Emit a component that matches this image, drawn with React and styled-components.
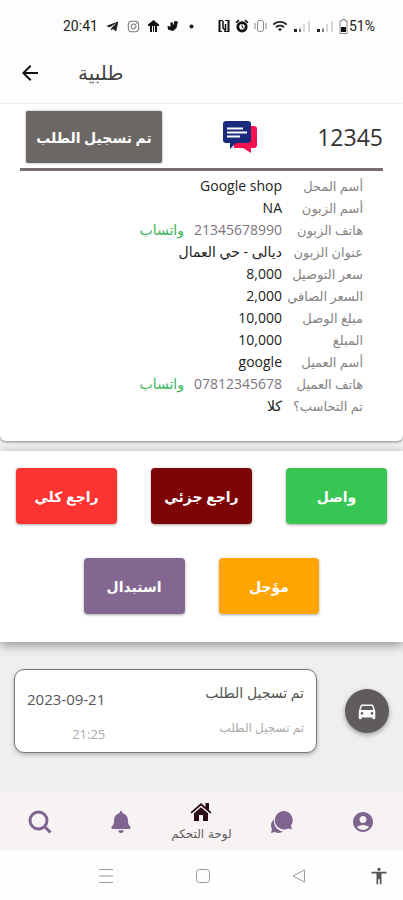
import React from 'react';
import styled, { createGlobalStyle } from 'styled-components';
import { FaTelegramPlane, FaInstagram, FaBell } from 'react-icons/fa';
import {
  MdAccessibility,
  MdAccountCircle,
  MdArrowBack,
  MdDirectionsCar,
  MdWifi,
} from 'react-icons/md';

const GlobalStyle = createGlobalStyle`
  * {
    box-sizing: border-box;
  }

  body {
    margin: 0;
    background: #efefef;
    color: #333;
    font-family: 'Open Sans', 'DejaVu Sans', sans-serif;
  }

  svg {
    display: block;
    flex-shrink: 0;
  }
`;

const Screen = styled.div`
  display: flex;
  flex-direction: column;
  min-height: 100vh;
`;

const StatusBar = styled.div`
  display: flex;
  align-items: center;
  justify-content: space-between;
  height: 52px;
  padding: 0 28px 0 63px;
  background: #fdfdfd;
  color: #222;
  font-family: Roboto, sans-serif;
  font-size: 14px;
`;

const StatusGroup = styled.div`
  display: flex;
  align-items: center;
  gap: ${({ $gap }) => $gap}px;
`;

const Header = styled.header`
  display: flex;
  align-items: center;
  gap: 36px;
  height: 52px;
  padding: 0 18px 10px;
  background: #fdfdfd;
`;

const BackButton = styled.button`
  padding: 0;
  border: 0;
  background: none;
  color: #111;
  font-size: 24px;
`;

const Title = styled.h1`
  margin: 0;
  color: #444;
  font-family: 'DejaVu Sans', sans-serif;
  font-size: 20px;
  font-weight: 400;
  line-height: 24px;
`;

const OrderCard = styled.section`
  padding: 7px 20px 24px;
  border-radius: 0 0 6px 6px;
  background: #fff;
  box-shadow: 0 1px 3px rgba(0, 0, 0, 0.45);
`;

const OrderTop = styled.div`
  display: flex;
  align-items: center;
  justify-content: space-between;
  padding: 0 0 5px 6px;
  border-bottom: 3px solid #7c6f74;
`;

const StatusButton = styled.button`
  width: 136px;
  height: 52px;
  padding: 0;
  border: 0;
  border-radius: 2px;
  background: #6b6765;
  box-shadow: 0 0 2px rgba(0, 0, 0, 0.5);
  color: #fff;
  font-family: inherit;
  font-size: 14px;
  font-weight: 700;
`;

const ChatButton = styled.button`
  padding: 0;
  border: 0;
  background: none;
`;

const OrderNumber = styled.span`
  color: #333;
  font-size: 23px;
  line-height: 32px;
`;

const Details = styled.dl`
  display: grid;
  grid-template-columns: 81px 1fr;
  margin: 0;
  padding: 4px 20px 0 0;
  font-size: 13px;
  line-height: 22px;
  white-space: nowrap;
`;

const Label = styled.dt`
  color: #858585;
`;

const Value = styled.dd`
  display: flex;
  gap: 10px;
  height: 22px;
  margin: 0;
  color: ${({ $phone }) => ($phone ? '#7d7480' : '#222')};
  font-size: 14px;
`;

const WhatsappLink = styled.a`
  color: #3bb55c;
  text-decoration: none;
`;

const Actions = styled.section`
  display: flex;
  flex-wrap: wrap;
  justify-content: center;
  gap: 34px;
  margin-top: 10px;
  padding: 17px 16px 28px;
  background: #fff;
  box-shadow: 0 3px 10px rgba(0, 0, 0, 0.4);
`;

const ActionButton = styled.button`
  flex: 0 0 calc((100% - 68px) / 3);
  height: 56px;
  padding: 0;
  border: 0;
  border-radius: 4px;
  background: ${({ $color }) => $color};
  box-shadow: 0 1px 3px rgba(0, 0, 0, 0.35);
  color: #fff;
  font-family: inherit;
  font-size: 14px;
  font-weight: 700;
`;

const Timeline = styled.main`
  display: flex;
  flex: 1;
  align-items: flex-start;
  gap: 28px;
  padding: 27px 14px;
`;

const Entry = styled.article`
  display: flex;
  flex: 1;
  justify-content: space-between;
  height: 84px;
  padding: 11px 12px;
  border: 1px solid #777;
  border-radius: 10px;
  background: #fff;
  box-shadow: 0 2px 4px rgba(0, 0, 0, 0.25);
`;

const EntryText = styled.div`
  display: flex;
  flex-direction: column;
  gap: 12px;
  padding-top: ${({ $drop }) => ($drop ? 6 : 0)}px;
  text-align: right;
`;

const EntryTitle = styled.span`
  color: #555;
  font-size: ${({ $size }) => $size}px;
  line-height: 24px;
`;

const EntryNote = styled.span`
  color: #aaa;
  font-size: ${({ $size }) => $size}px;
  line-height: 22px;
`;

const EntryIcon = styled.span`
  display: grid;
  place-items: center;
  width: 44px;
  height: 44px;
  margin-top: 20px;
  border-radius: 50%;
  background: #5f5c5b;
  box-shadow: 0 2px 5px rgba(0, 0, 0, 0.35);
  color: #fff;
  font-size: 22px;
`;

const TabBar = styled.nav`
  display: grid;
  grid-template-columns: repeat(5, 1fr);
  height: 59px;
  background: #f7f3f3;
`;

const Tab = styled.a`
  display: flex;
  flex-direction: column;
  align-items: center;
  justify-content: center;
  gap: 4px;
  color: ${({ $active }) => ($active ? '#2b0b18' : '#7f6490')};
  font-size: 24px;
  text-decoration: none;
`;

const TabLabel = styled.span`
  color: #64595f;
  font-family: 'DejaVu Sans', sans-serif;
  font-size: 12px;
  line-height: 16px;
  white-space: nowrap;
`;

const SystemBar = styled.div`
  display: grid;
  grid-template-columns: 58fr 96fr 97fr 96fr 56fr;
  align-items: center;
  height: 49px;
  background: #fefefe;
  color: #999;
`;

const SystemButton = styled.button`
  display: grid;
  place-items: center;
  padding: 0;
  border: 0;
  background: none;
  color: inherit;

  &:first-of-type {
    grid-column: 2;
  }

  &:last-of-type {
    padding-left: 8px;
  }
`;

const StoreIcon = () => (
  <svg width="11" height="12" viewBox="0 0 11 12" fill="#111">
    <path d="M5.500 0 0 4.500V6h2v6h2V6h1v6h1V6h1v6h2V6h2V4.500L8.500 2.500z" />
  </svg>
);

const RooIcon = () => (
  <svg width="11" height="12" viewBox="0 0 11 12" fill="#111">
    <path d="M7.500 1 11 1.500 9.500 8 6 11 1 9.500.500 6l3 .5L3.500 2.500l2-.3.8 3z" />
  </svg>
);

const DotIcon = () => (
  <svg width="11" height="12" viewBox="0 0 11 12" fill="#111">
    <circle cx="5.500" cy="6.500" r="2" />
  </svg>
);

const NfcIcon = () => (
  <svg width="12" height="12" viewBox="0 0 12 12" fill="none" stroke="#111">
    <path d="M1.500 0v12M10.500 0v12" strokeWidth="2" />
    <path d="M1 .5h4M7 .5h4M1 11.500h3M6 11.500h5" />
    <path d="M5 1v7l2.500 2.500V4" strokeWidth="1.500" />
  </svg>
);

const AlarmIcon = () => (
  <svg width="14" height="14" viewBox="0 0 14 14" fill="#111">
    <path d="m3.500.500 1 1.200L1.500 4.300.500 3zM10.500.500l-1 1.200 3 2.600 1-1.300z" />
    <circle cx="7" cy="7.800" r="5.600" />
    <circle cx="7" cy="7.800" r="2.800" fill="#fff" />
    <path d="M7 5.500v2.600l1.800 1" fill="none" stroke="#111" />
  </svg>
);

const VibrateIcon = () => (
  <svg width="13" height="12" viewBox="0 0 13 12" fill="none" stroke="#888">
    <rect x="3.500" y=".5" width="6" height="11" rx="2" />
    <path d="M1 3v6M12 3v6" />
  </svg>
);

const SignalIcon = () => (
  <svg width="18" height="12" viewBox="0 0 18 12">
    <path d="M1 9h3v3H1z" fill="#222" />
    <path d="M6 7h2v5H6zM10 4h2v8h-2zM15 1h2v11h-2z" fill="#d8d8d8" />
    <path d="M6 9h2v3H6z" fill="#777" />
  </svg>
);

const BatteryIcon = () => (
  <svg width="9" height="15" viewBox="0 0 9 15">
    <path d="M3 .5h3V2h2v12.500H1V2h2z" fill="#fff" stroke="#888" />
    <path d="M2 8h5v5H2z" fill="#111" />
  </svg>
);

const ChatIcon = () => (
  <svg width="34" height="32" viewBox="0 0 34 32">
    <path d="M11 5h20q3 0 3 3v16q0 3-3 3h-3v5l-8-5h-9z" fill="#fa0f50" />
    <path
      d="M3 0h22q3 0 3 3v16q0 3-3 3H13l-6 6v-6H3q-3 0-3-3V3q0-3 3-3z"
      fill="#192a7c"
    />
    <path d="M4 7.500h16M4 11.500h20M4 15.500h13" stroke="#fff" strokeWidth="2" />
  </svg>
);

const SearchIcon = () => (
  <svg width="24" height="24" viewBox="0 0 24 24" fill="none" stroke="currentColor">
    <circle cx="10.500" cy="10.500" r="8.500" strokeWidth="3" />
    <path d="m16.500 16.500 6 6" strokeWidth="3" />
  </svg>
);

const BubblesIcon = () => (
  <svg width="24" height="24" viewBox="0 0 24 24" fill="currentColor">
    <path d="M4 9.500C0 13 .800 17 2 19l-1 4 4-1c3 1.500 6 1 8-.5C7 20.500 3.500 15.500 4 9.500z" />
    <path d="M14 1a9.200 9.200 0 1 0 4.200 17.400L22 19.500l-1-4A9.200 9.200 0 0 0 14 1z" />
  </svg>
);

const HomeIcon = () => (
  <svg width="22" height="20" viewBox="0 0 22 20" fill="currentColor">
    <path d="M11 1 .5 10.200l1.200 1.300L11 3.500l9.300 8 1.200-1.300-2.500-2.200V1h-3.500v4z" />
    <path d="M11 5.200 4 11.200V19h5v-6h4v6h5v-7.800z" />
  </svg>
);

const details = [
  { label: 'أسم المحل', value: 'Google shop' },
  { label: 'أسم الزبون', value: 'NA' },
  { label: 'هاتف الزبون', value: '21345678990', phone: true },
  { label: 'عنوان الزبون', value: 'ديالى - حي العمال' },
  { label: 'سعر التوصيل', value: '8,000' },
  { label: 'السعر الصافي', value: '2,000' },
  { label: 'مبلغ الوصل', value: '10,000' },
  { label: 'المبلغ', value: '10,000' },
  { label: 'أسم العميل', value: 'google' },
  { label: 'هاتف العميل', value: '07812345678', phone: true },
  { label: 'تم التحاسب؟', value: 'كلا' },
];

const actions = [
  { label: 'واصل', color: '#37c653' },
  { label: 'راجع جزئي', color: '#7d0505' },
  { label: 'راجع كلي', color: '#fd3431' },
  { label: 'مؤجل', color: '#ffa502' },
  { label: 'استبدال', color: '#846791' },
];

const App = () => (
  <Screen>
    <GlobalStyle />

    <StatusBar>
      <StatusGroup $gap={8}>
        <span>20:41</span>
        <FaTelegramPlane size={13} />
        <FaInstagram size={13} color="#777" />
        <StoreIcon />
        <RooIcon />
        <DotIcon />
      </StatusGroup>
      <StatusGroup $gap={5}>
        <NfcIcon />
        <AlarmIcon />
        <VibrateIcon />
        <MdWifi size={16} />
        <SignalIcon />
        <SignalIcon />
        <StatusGroup $gap={1}>
          <BatteryIcon />
          <span>51%</span>
        </StatusGroup>
      </StatusGroup>
    </StatusBar>

    <Header>
      <BackButton aria-label="رجوع">
        <MdArrowBack />
      </BackButton>
      <Title dir="rtl">طلبية</Title>
    </Header>

    <OrderCard>
      <OrderTop>
        <StatusButton dir="rtl">تم تسجيل الطلب</StatusButton>
        <ChatButton aria-label="محادثة">
          <ChatIcon />
        </ChatButton>
        <OrderNumber>12345</OrderNumber>
      </OrderTop>

      <Details dir="rtl">
        {details.map(({ label, value, phone }) => (
          <React.Fragment key={label}>
            <Label>{label}</Label>
            <Value $phone={phone}>
              <span>{value}</span>
              {phone && <WhatsappLink href="#whatsapp">واتساب</WhatsappLink>}
            </Value>
          </React.Fragment>
        ))}
      </Details>
    </OrderCard>

    <Actions dir="rtl">
      {actions.map(({ label, color }) => (
        <ActionButton key={label} $color={color}>
          {label}
        </ActionButton>
      ))}
    </Actions>

    <Timeline>
      <Entry>
        <EntryText $drop>
          <EntryTitle $size={15}>2023-09-21</EntryTitle>
          <EntryNote $size={13}>21:25</EntryNote>
        </EntryText>
        <EntryText dir="rtl">
          <EntryTitle $size={14}>تم تسجيل الطلب</EntryTitle>
          <EntryNote $size={12}>تم تسجيل الطلب</EntryNote>
        </EntryText>
      </Entry>
      <EntryIcon>
        <MdDirectionsCar />
      </EntryIcon>
    </Timeline>

    <TabBar>
      <Tab href="#search" aria-label="بحث">
        <SearchIcon />
      </Tab>
      <Tab href="#notifications" aria-label="الإشعارات">
        <FaBell size={22} />
      </Tab>
      <Tab href="#home" $active>
        <HomeIcon />
        <TabLabel>لوحة التحكم</TabLabel>
      </Tab>
      <Tab href="#chats" aria-label="المحادثات">
        <BubblesIcon />
      </Tab>
      <Tab href="#account" aria-label="الحساب">
        <MdAccountCircle />
      </Tab>
    </TabBar>

    <SystemBar>
      <SystemButton aria-label="التطبيقات">
        <svg width="14" height="14" viewBox="0 0 14 14" stroke="currentColor">
          <path d="M0 .5h14M0 7h14M0 13.500h14" />
        </svg>
      </SystemButton>
      <SystemButton aria-label="الرئيسية">
        <svg width="14" height="14" viewBox="0 0 14 14" fill="none" stroke="currentColor">
          <rect x=".5" y=".5" width="13" height="13" rx="3" />
        </svg>
      </SystemButton>
      <SystemButton aria-label="رجوع">
        <svg width="14" height="14" viewBox="0 0 14 14" fill="none" stroke="currentColor">
          <path d="M12.500 1v12L1 7z" strokeLinejoin="round" />
        </svg>
      </SystemButton>
      <SystemButton aria-label="إمكانية الوصول">
        <MdAccessibility size={20} color="#555" />
      </SystemButton>
    </SystemBar>
  </Screen>
);

export default App;
